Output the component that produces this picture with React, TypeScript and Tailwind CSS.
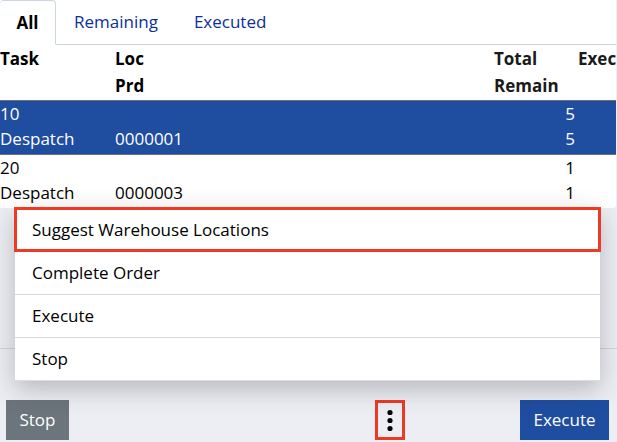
import React from "react";

const tabs = ["All", "Remaining", "Executed"];

const tasks = [
  { id: "10", type: "Despatch", product: "0000001", total: 5, remain: 5, selected: true },
  { id: "20", type: "Despatch", product: "0000003", total: 1, remain: 1, selected: false },
];

const actions = ["Suggest Warehouse Locations", "Complete Order", "Execute", "Stop"];

function Tabs() {
  return (
    <div role="tablist" className="flex h-[45px] shrink-0 border-b border-[#ccd6e2]">
      {tabs.map((tab, i) => (
        <button
          key={tab}
          type="button"
          role="tab"
          aria-selected={i === 0}
          className={
            i === 0
              ? "-mb-px w-14 rounded-t-sm border border-l-0 border-[#ccd6e2] border-b-white bg-white font-bold text-black"
              : "px-[18px] text-[#0b2f9b]"
          }
        >
          {tab}
        </button>
      ))}
    </div>
  );
}

function TaskTable() {
  return (
    <table className="w-full table-fixed border-collapse text-left">
      <colgroup>
        <col className="w-[115px]" />
        <col />
        <col className="w-[84px]" />
        <col className="w-[38px]" />
      </colgroup>
      <thead>
        <tr className="h-[55px] align-top leading-[27px]">
          <th scope="col">Task</th>
          <th scope="col">
            Loc
            <br />
            Prd
          </th>
          <th scope="col" className="text-[#1a1a1a]">
            Total
            <br />
            Remain
          </th>
          <th scope="col" className="text-[#1a1a1a]">Exec</th>
        </tr>
      </thead>
      <tbody>
        {tasks.map((task) => (
          <tr
            key={task.id}
            className={
              "h-[54px] border-t border-[#6b6f73] align-top leading-[25px] " +
              (task.selected ? "bg-[#1f4da0] text-white" : "bg-white text-black")
            }
          >
            <td>
              {task.id}
              <br />
              {task.type}
            </td>
            <td>
              <br />
              {task.product}
            </td>
            <td className="pr-[3px] text-right">
              {task.total}
              <br />
              {task.remain}
            </td>
            <td />
          </tr>
        ))}
      </tbody>
    </table>
  );
}

function ActionMenu() {
  return (
    <ul
      role="menu"
      className="absolute right-[17px] bottom-[61px] left-[15px] border-b border-[#dcdde0] bg-white shadow-[0_8px_24px_rgba(40,44,52,0.28)]"
    >
      {actions.map((action, i) => (
        <li key={action} role="none">
          <button
            type="button"
            role="menuitem"
            className={
              "block h-[43px] w-full px-[17px] text-left text-black " +
              (i === 0
                ? "relative outline-3 -outline-offset-2 outline-[#ee3a24]"
                : "border-t border-[#d9dadc]")
            }
          >
            {action}
          </button>
        </li>
      ))}
    </ul>
  );
}

export default function App() {
  return (
    <div className="flex min-h-screen flex-col bg-[#edeef3] font-['Open_Sans',sans-serif] text-[17px] text-black">
      <main className="grow">
        <section className="mr-px overflow-hidden rounded-br-sm bg-white">
          <Tabs />
          <TaskTable />
        </section>
      </main>
      <footer className="relative border-t border-[#d2d4d9] pt-[51px] pr-2 pb-[2px] pl-[6px]">
        <ActionMenu />
        <div className="flex h-10 items-stretch justify-between">
          <button type="button" className="w-[63px] bg-[#6c747c] text-white">
            Stop
          </button>
          <div className="flex grow justify-end pr-[115px]">
            <button
              type="button"
              aria-label="More actions"
              className="flex w-[30px] items-center justify-center border-3 border-[#ee3a24]"
            >
              <svg width="6" height="22" viewBox="0 0 6 22" fill="black" aria-hidden="true">
                <circle cx="3" cy="3.5" r="2.6" />
                <circle cx="3" cy="11.5" r="2.6" />
                <circle cx="3" cy="19.5" r="2.6" />
              </svg>
            </button>
          </div>
          <button type="button" className="w-[89px] bg-[#1f4da0] text-white">
            Execute
          </button>
        </div>
      </footer>
    </div>
  );
}
